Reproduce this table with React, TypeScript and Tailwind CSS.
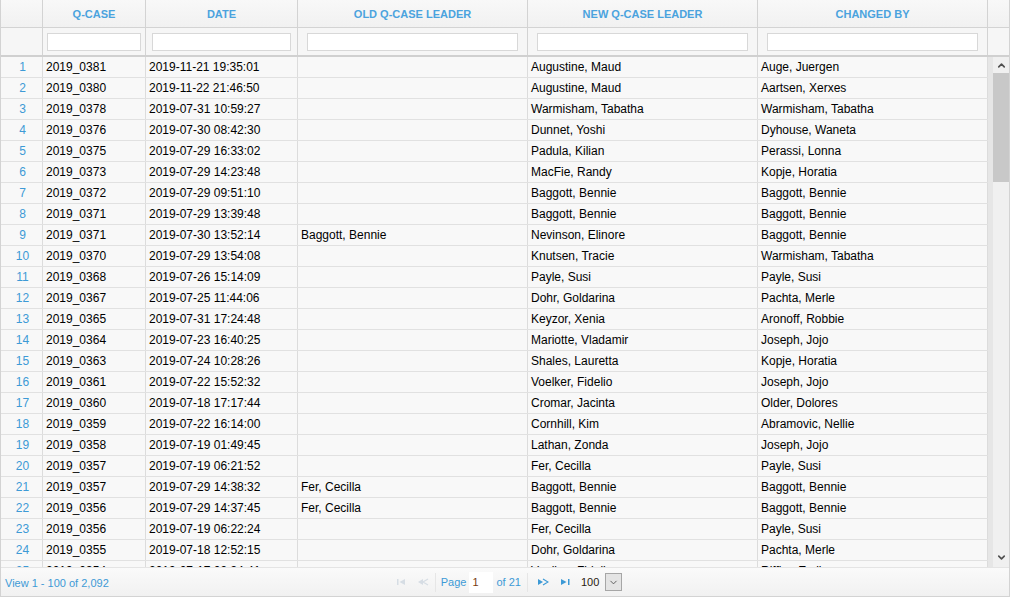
import { ChevronUp, ChevronDown } from "lucide-react";

type Row = [string, string, string, string, string];

const rows: Row[] = [
  ["2019_0381", "2019-11-21 19:35:01", "", "Augustine, Maud", "Auge, Juergen"],
  ["2019_0380", "2019-11-22 21:46:50", "", "Augustine, Maud", "Aartsen, Xerxes"],
  ["2019_0378", "2019-07-31 10:59:27", "", "Warmisham, Tabatha", "Warmisham, Tabatha"],
  ["2019_0376", "2019-07-30 08:42:30", "", "Dunnet, Yoshi", "Dyhouse, Waneta"],
  ["2019_0375", "2019-07-29 16:33:02", "", "Padula, Kilian", "Perassi, Lonna"],
  ["2019_0373", "2019-07-29 14:23:48", "", "MacFie, Randy", "Kopje, Horatia"],
  ["2019_0372", "2019-07-29 09:51:10", "", "Baggott, Bennie", "Baggott, Bennie"],
  ["2019_0371", "2019-07-29 13:39:48", "", "Baggott, Bennie", "Baggott, Bennie"],
  ["2019_0371", "2019-07-30 13:52:14", "Baggott, Bennie", "Nevinson, Elinore", "Baggott, Bennie"],
  ["2019_0370", "2019-07-29 13:54:08", "", "Knutsen, Tracie", "Warmisham, Tabatha"],
  ["2019_0368", "2019-07-26 15:14:09", "", "Payle, Susi", "Payle, Susi"],
  ["2019_0367", "2019-07-25 11:44:06", "", "Dohr, Goldarina", "Pachta, Merle"],
  ["2019_0365", "2019-07-31 17:24:48", "", "Keyzor, Xenia", "Aronoff, Robbie"],
  ["2019_0364", "2019-07-23 16:40:25", "", "Mariotte, Vladamir", "Joseph, Jojo"],
  ["2019_0363", "2019-07-24 10:28:26", "", "Shales, Lauretta", "Kopje, Horatia"],
  ["2019_0361", "2019-07-22 15:52:32", "", "Voelker, Fidelio", "Joseph, Jojo"],
  ["2019_0360", "2019-07-18 17:17:44", "", "Cromar, Jacinta", "Older, Dolores"],
  ["2019_0359", "2019-07-22 16:14:00", "", "Cornhill, Kim", "Abramovic, Nellie"],
  ["2019_0358", "2019-07-19 01:49:45", "", "Lathan, Zonda", "Joseph, Jojo"],
  ["2019_0357", "2019-07-19 06:21:52", "", "Fer, Cecilla", "Payle, Susi"],
  ["2019_0357", "2019-07-29 14:38:32", "Fer, Cecilla", "Baggott, Bennie", "Baggott, Bennie"],
  ["2019_0356", "2019-07-29 14:37:45", "Fer, Cecilla", "Baggott, Bennie", "Baggott, Bennie"],
  ["2019_0356", "2019-07-19 06:22:24", "", "Fer, Cecilla", "Payle, Susi"],
  ["2019_0355", "2019-07-18 12:52:15", "", "Dohr, Goldarina", "Pachta, Merle"],
  ["2019_0354", "2019-07-17 09:34:41", "", "Voelker, Fidelio", "Riffler, Emil"],
];

const headers = ["Q-CASE", "DATE", "OLD Q-CASE LEADER", "NEW Q-CASE LEADER", "CHANGED BY"];

const cols = "grid grid-cols-[42px_103px_152px_230px_230px_230px]";

const PagerIcon = ({ kind, faint }: { kind: "first" | "prev" | "next" | "last"; faint?: boolean }) => {
  const c = faint ? "#d6dde4" : "#3d9ad6";
  return (
    <svg width="12" height="8" viewBox="0 0 12 8">
      {kind === "first" && (
        <>
          <rect x="1" y="1" width="1.5" height="6" fill={c} />
          <path d="M9 1 L3.5 4 L9 7 Z" fill={c} />
        </>
      )}
      {kind === "prev" && (
        <>
          <path d="M6 1 L1 4 L6 7 Z" fill={c} />
          <path d="M11 1 L6 4 L11 7" fill="none" stroke={c} strokeWidth="1.2" />
        </>
      )}
      {kind === "next" && (
        <>
          <path d="M1 1 L6 4 L1 7 Z" fill={c} />
          <path d="M6 1 L11 4 L6 7" fill="none" stroke={c} strokeWidth="1.2" />
        </>
      )}
      {kind === "last" && (
        <>
          <path d="M2 1 L7.5 4 L2 7 Z" fill={c} />
          <rect x="9" y="1" width="1.5" height="6" fill={c} />
        </>
      )}
    </svg>
  );
};

const App = () => {
  return (
    <div
      className="w-[1010px] h-[599px] bg-white text-[12px] text-black"
      style={{ fontFamily: '"Liberation Sans", Arial, sans-serif' }}
    >
      <div className="w-[1010px] border border-[#d3d3d3] border-t-0">
        {/* header */}
        <div className="flex bg-gradient-to-b from-[#f8f8f8] to-[#f1f1f1]">
          <div className={cols + " h-[27px]"}>
            <div className="border-r border-[#d3d3d3]" />
            {headers.map((h) => (
              <div
                key={h}
                className="border-r border-[#d3d3d3] flex items-center justify-center font-bold text-[11px] text-[#4ba3de] pt-[1px]"
              >
                {h}
              </div>
            ))}
          </div>
          <div className="flex-1" />
        </div>
        {/* filter row */}
        <div className="flex bg-[#f6f6f6] border-t border-[#d3d3d3] border-b-2 border-b-[#d0d0d0]">
          <div className={cols + " h-[27px]"}>
            <div className="border-r border-[#d3d3d3]" />
            {headers.map((h) => (
              <div key={h} className="border-r border-[#d3d3d3] flex items-center justify-center">
                <div className="w-[92%] h-[18px] bg-white border border-[#d8d8d8]" />
              </div>
            ))}
          </div>
          <div className="flex-1" />
        </div>
        {/* body */}
        <div className="flex h-[510px]">
          <div className="w-[987px] overflow-hidden bg-[#f8f8f8]">
            {rows.map((r, i) => (
              <div key={i} className={cols + " h-[21px] border-b border-[#e1e1e1]"}>
                <div className="border-r border-[#dcdcdc] flex items-center justify-center pl-[2px] text-[#3d9ad6]">
                  {i + 1}
                </div>
                {r.map((c, j) => (
                  <div
                    key={j}
                    className="border-r border-[#dcdcdc] flex items-center pl-[3px] whitespace-nowrap overflow-hidden"
                  >
                    {c}
                  </div>
                ))}
              </div>
            ))}
          </div>
          <div className="flex-1 flex">
            <div className="w-[5px] bg-[#e6e6e6]" />
            <div className="flex-1 bg-[#f0f0f0] flex flex-col">
              <div className="h-[16px] flex items-center justify-center">
                <ChevronUp className="size-[11px] text-[#505050]" strokeWidth={3.5} />
              </div>
              <div className="h-[109px] bg-[#c8c8c8]" />
              <div className="flex-1" />
              <div className="h-[20px] flex items-center justify-center">
                <ChevronDown className="size-[11px] text-[#505050]" strokeWidth={3.5} />
              </div>
            </div>
          </div>
        </div>
        {/* footer */}
        <div className="h-[29px] grid grid-cols-3 items-center text-[11px] bg-gradient-to-b from-[#fafafa] to-[#f1f1f1] border-t border-[#e4e4e4]">
          <div className="pl-[4px] text-[#3d9ad6] pt-[2px]">View 1 - 100 of 2,092</div>
          <div className="flex items-center justify-center h-full pl-[8px]">
            <div className="flex items-center gap-[9px] pr-[6px]">
              <PagerIcon kind="first" faint />
              <PagerIcon kind="prev" faint />
            </div>
            <div className="w-px h-[19px] bg-[#e6e6e6]" />
            <div className="flex items-center pl-[5px] pr-[6px] text-[#3d9ad6]">
              <span>Page</span>
              <span className="ml-[3px] w-[24px] h-[21px] bg-white flex items-center pl-[3px] text-[#7a3c10]">1</span>
              <span className="ml-[3px]">of 21</span>
            </div>
            <div className="w-px h-[19px] bg-[#e6e6e6]" />
            <div className="flex items-center gap-[10px] pl-[9px] pr-[10px]">
              <PagerIcon kind="next" />
              <PagerIcon kind="last" />
            </div>
            <span className="text-[#2a1a10] pr-[6px]">100</span>
            <div className="w-[17px] h-[18px] border border-[#a6a6a6] bg-[#e4e4e4] flex items-center justify-center">
              <ChevronDown className="size-[11px] text-[#555]" strokeWidth={2} />
            </div>
          </div>
          <div />
        </div>
      </div>
    </div>
  );
};

export default App;
